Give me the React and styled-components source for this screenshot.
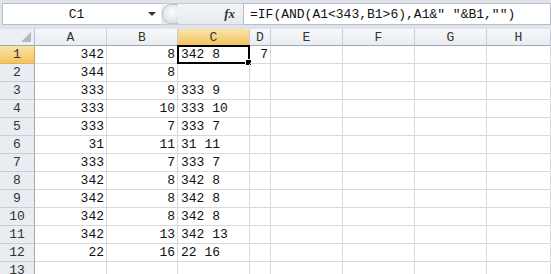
import styled, { createGlobalStyle } from 'styled-components'

/* GLOBAL */
const GlobalStyle = createGlobalStyle`
  html, body {
    margin: 0;
    padding: 0;
    background: #ffffff;
    overflow: hidden;
  }
`

/* DATA */
const rows = [
  ['342', '8', '342 8', '7'],
  ['344', '8', '', ''],
  ['333', '9', '333 9', ''],
  ['333', '10', '333 10', ''],
  ['333', '7', '333 7', ''],
  ['31', '11', '31 11', ''],
  ['333', '7', '333 7', ''],
  ['342', '8', '342 8', ''],
  ['342', '8', '342 8', ''],
  ['342', '8', '342 8', ''],
  ['342', '13', '342 13', ''],
  ['22', '16', '22 16', ''],
  ['', '', '', ''],
]

const columns = ['A', 'B', 'C', 'D', 'E', 'F', 'G', 'H']

const mono = `"Liberation Mono", "Noto Sans CJK SC", monospace`

/* PAGE */
const Page = styled.div`
  width: 551px;
  height: 274px;
  overflow: hidden;
  display: flex;
  flex-direction: column;
  background: #dfe4ea;
`

/* FORMULA BAR */
const FormulaBar = styled.div`
  height: 22px;
  margin: 3px 0 4px 2px;
  display: flex;
  align-items: stretch;
`

const NameBox = styled.div`
  width: 159px;
  box-sizing: border-box;
  display: flex;
  align-items: center;
  background: #ffffff;
  border: 1px solid #b7bec8;
  border-right: none;
  font-family: ${mono};
  font-size: 13px;
  color: #111;
`

const NameText = styled.span`
  flex: 1;
  text-align: center;
  padding-left: 2px;
`

const DropArrow = styled.span`
  width: 0;
  height: 0;
  margin-right: 5px;
  border-left: 4px solid transparent;
  border-right: 4px solid transparent;
  border-top: 4px solid #333;
`

const ToolArea = styled.div`
  width: 82px;
  display: flex;
  align-items: center;
  justify-content: space-between;
  background: linear-gradient(#f3f5f8, #e6eaef);
  border-top: 1px solid #c5ccd5;
  border-bottom: 1px solid #c5ccd5;
  box-sizing: border-box;
`

const Knob = styled.span`
  width: 15px;
  height: 18px;
  margin-left: 1px;
  border-radius: 9px 0 0 9px;
  border: 1px solid #b9c0c9;
  border-right: none;
  background: radial-gradient(circle at 60% 40%, #ffffff 0, #e4e8ed 55%, #d3d8df 100%);
`

const Fx = styled.span`
  margin-right: 8px;
  font-family: "Liberation Serif", serif;
  font-style: italic;
  font-weight: bold;
  font-size: 13px;
  color: #333;
`

const FormulaInput = styled.div`
  flex: 1;
  box-sizing: border-box;
  display: flex;
  align-items: center;
  padding-left: 6px;
  background: #ffffff;
  border: 1px solid #b7bec8;
  font-family: ${mono};
  font-size: 13px;
  color: #111;
  white-space: pre;
`

/* SHEET */
const Sheet = styled.div`
  flex: 1;
  display: grid;
  grid-template-columns: 35px 72px 71px 72px 21px 72px 72px 72px 1fr;
  grid-template-rows: 17px;
  grid-auto-rows: 18px;
  background: #ffffff;
`

const Corner = styled.div`
  position: relative;
  background: #eceff3;
  border-right: 1px solid #b9c0c9;
  border-bottom: 1px solid #9fa8b4;

  &::after {
    content: '';
    position: absolute;
    right: 3px;
    bottom: 3px;
    border-left: 10px solid transparent;
    border-bottom: 10px solid #b4b9c0;
  }
`

const ColHead = styled.div`
  display: flex;
  align-items: center;
  justify-content: center;
  font-family: ${mono};
  font-size: 13px;
  color: #333;
  border-right: 1px solid #c7ced6;
  border-bottom: 1px solid ${({ $active }) => ($active ? '#e0a43c' : '#9fa8b4')};
  background: ${({ $active }) =>
    $active
      ? 'linear-gradient(#fae3a8, #f3c45f)'
      : 'linear-gradient(#f6f8fa, #e9ecf0)'};
`

const RowHead = styled.div`
  display: flex;
  align-items: center;
  justify-content: center;
  font-family: ${mono};
  font-size: 13px;
  color: #333;
  border-right: 1px solid ${({ $active }) => ($active ? '#e0a43c' : '#9fa8b4')};
  border-bottom: 1px solid ${({ $active }) => ($active ? '#e0b25a' : '#c7ced6')};
  background: ${({ $active }) =>
    $active ? 'linear-gradient(#fae3a8, #f3c45f)' : '#e9ecf0'};
`

const Cell = styled.div`
  position: relative;
  box-sizing: border-box;
  display: flex;
  align-items: center;
  justify-content: ${({ $text }) => ($text ? 'flex-start' : 'flex-end')};
  padding: ${({ $text }) => ($text ? '0 0 0 3px' : '0 2px 0 0')};
  font-family: ${mono};
  font-size: 13px;
  color: #111;
  white-space: pre;
  border-right: 1px solid #d9d9d9;
  border-bottom: 1px solid #d9d9d9;
`

const Selection = styled.span`
  position: absolute;
  left: -1px;
  top: -1px;
  right: -1px;
  bottom: -1px;
  border: 2px solid #000;
  pointer-events: none;

  &::after {
    content: '';
    position: absolute;
    right: -4px;
    bottom: -4px;
    width: 5px;
    height: 5px;
    background: #000;
    border: 1px solid #fff;
  }
`

/* APP */
function App() {
  return (
    <Page>
      <GlobalStyle />

      {/* FORMULA BAR */}
      <FormulaBar>
        <NameBox>
          <NameText>C1</NameText>
          <DropArrow />
        </NameBox>
        <ToolArea>
          <Knob />
          <Fx>fx</Fx>
        </ToolArea>
        <FormulaInput>{'=IF(AND(A1<343,B1>6),A1&" "&B1,"")'}</FormulaInput>
      </FormulaBar>

      {/* SHEET */}
      <Sheet>
        <Corner />
        {columns.map((c) => (
          <ColHead key={c} $active={c === 'C'}>
            {c}
          </ColHead>
        ))}

        {rows.map((r, i) => (
          <Row key={i} index={i} values={r} />
        ))}
      </Sheet>
    </Page>
  )
}

/* ROW */
function Row({ index, values }) {
  return (
    <>
      <RowHead $active={index === 0}>{index + 1}</RowHead>
      <Cell>{values[0]}</Cell>
      <Cell>{values[1]}</Cell>
      <Cell $text>
        {values[2]}
        {index === 0 && <Selection />}
      </Cell>
      <Cell>{values[3]}</Cell>
      <Cell />
      <Cell />
      <Cell />
      <Cell />
    </>
  )
}

export default App
